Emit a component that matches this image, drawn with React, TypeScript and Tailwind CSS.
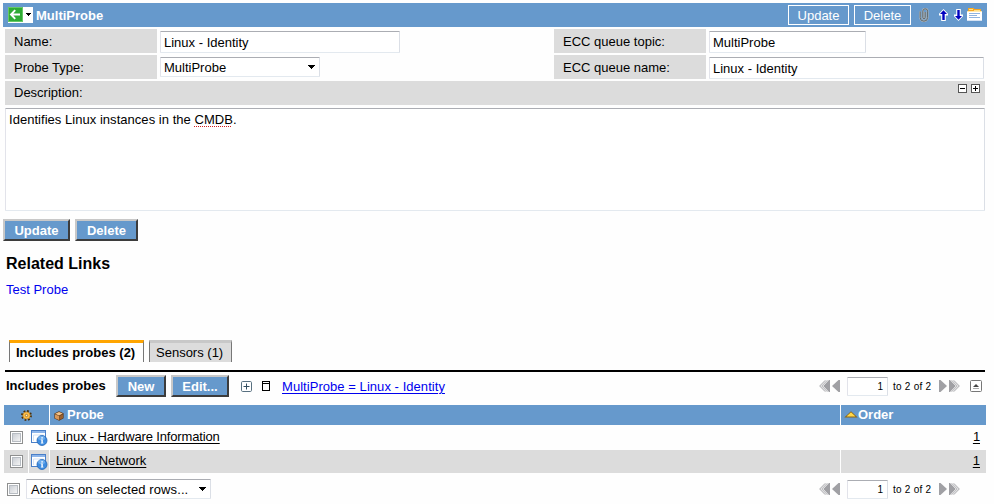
import React from "react";

const field =
  "border border-t-[#abadb3] border-l-[#e2e3ea] border-r-[#dbdfe6] border-b-[#e3e9ef] bg-white rounded-[1px]";

function BackMenu() {
  return (
    <svg width="25" height="16" viewBox="0 0 25 16" shapeRendering="crispEdges">
      <rect width="25" height="16" fill="#fff" />
      <rect x="0" y="0" width="15" height="15" fill="#66c866" />
      <rect x="1" y="1" width="13" height="13" fill="#2eab34" />
      <path d="M3 7.5h9M7.2 3.2L3 7.5l4.2 4.3" stroke="#fff" strokeWidth="1.9" fill="none" shapeRendering="auto" />
      <path d="M18 6h5v1h-1v1h-1v1h-1v-1h-1v-1h-1z" fill="#000" />
    </svg>
  );
}

function Clip() {
  return (
    <svg width="10" height="14" viewBox="0 0 10 14" fill="none">
      <path d="M1.2 3.5v6a3.7 3.7 0 0 0 7.4 0V3.2a2.4 2.4 0 0 0-4.8 0v6.3a1.2 1.2 0 0 0 2.4 0V4" stroke="#aeb6bc" strokeWidth="2" />
      <path d="M1.2 3.5v6a3.7 3.7 0 0 0 7.4 0V3.2a2.4 2.4 0 0 0-4.8 0v6.3a1.2 1.2 0 0 0 2.4 0V4" stroke="#5e686c" strokeWidth="1" />
    </svg>
  );
}

function Arrow({ down = false }: { down?: boolean }) {
  return (
    <svg width="9" height="12" viewBox="0 0 9 12" className={down ? "rotate-180" : ""}>
      <path d="M4.5 0L9 4.8v1.7H6.8V12H2.2V6.5H0V4.8z" fill="#fff" />
      <path d="M4.5 1.2L8 5H5.7v6H3.3V5H1z" fill="#0000c0" />
    </svg>
  );
}

function FormIcon() {
  return (
    <svg width="15" height="13" viewBox="0 0 15 13" shapeRendering="crispEdges">
      <path d="M1 0h6v1h7v3H1z" fill="#f5a623" />
      <path d="M2 1h4v1H2zM7 2h6v1H7z" fill="#ffe08a" />
      <rect x="0" y="3" width="15" height="10" fill="#fff" />
      <rect x="0" y="3" width="15" height="1" fill="#ffe9ae" />
      <path d="M2 5h11v1H2zM2 7h8v1H2zM2 9h11v1H2z" fill="#8fb3df" />
      <rect x="0" y="12" width="15" height="1" fill="#d5e2f2" />
    </svg>
  );
}

function SizeBox({ plus = false }: { plus?: boolean }) {
  return (
    <svg width="9" height="9" viewBox="0 0 9 9" shapeRendering="crispEdges">
      <rect x=".5" y=".5" width="8" height="8" fill="#fff" stroke="#555" />
      <path d={plus ? "M2 4h5v1H2zM4 2h1v5H4z" : "M2 4h5v1H2z"} fill="#000" />
    </svg>
  );
}

function Caret() {
  return (
    <svg width="7" height="4" viewBox="0 0 7 4" shapeRendering="crispEdges">
      <path d="M0 0h7v1H6v1H5v1H4v1H3V3H2V2H1V1H0z" fill="#000" />
    </svg>
  );
}

function Gear() {
  return (
    <svg width="11" height="11" viewBox="0 0 11 11">
      <circle cx="5.5" cy="5.5" r="4.5" fill="none" stroke="#4a2f08" strokeWidth="1.9" strokeDasharray="1.77 1.77" />
      <circle cx="5.5" cy="5.5" r="3.6" fill="#ffc04a" stroke="#c07a18" strokeWidth=".7" />
      <circle cx="5.5" cy="5.5" r="1.2" fill="#fff3cf" stroke="#8a5a14" strokeWidth=".7" />
    </svg>
  );
}

function Cube() {
  return (
    <svg width="10" height="10" viewBox="0 0 10 10">
      <path d="M5 .3l4.6 2v5L5.2 9.8.4 7.6v-5z" fill="#5c3616" />
      <path d="M5 1l3.8 1.6L5 4.4 1.2 2.8z" fill="#f0c48c" />
      <path d="M1 3.3l4 1.6v4L1 7.2z" fill="#d8985a" />
      <path d="M5.3 5L9 3.2v3.7L5.3 8.9z" fill="#98602d" />
    </svg>
  );
}

function InfoIcon() {
  return (
    <svg width="17" height="16" viewBox="0 0 17 16">
      <rect x=".5" y=".5" width="14" height="12" fill="#fff" stroke="#4a7fc8" />
      <rect x="1" y="1" width="13" height="2" fill="#8db5ea" />
      <path d="M2.5 5h10M2.5 11V5" stroke="#d4e2f5" fill="none" />
      <circle cx="11" cy="10.5" r="5" fill="#3d8ce0" stroke="#2464b4" strokeWidth=".8" />
      <ellipse cx="10.5" cy="8" rx="3.5" ry="2.2" fill="#8cc2f5" opacity=".6" />
      <path d="M10.3 7.2h1.6v1.4h-1.6zM9.8 9.5h2v3.2h.7v.8H9.8v-.8h.6v-2.4h-.6z" fill="#fff" />
    </svg>
  );
}

function Checkbox() {
  return (
    <span className="block size-[13px] shrink-0 border border-[#8e8f8f] bg-white p-px">
      <span className="block size-[9px] border border-[#b7bcc2] bg-linear-to-br from-[#cbcfd5] to-[#f4f4f4]" />
    </span>
  );
}

function OutsetButton({ label, className }: { label: string; className: string }) {
  return (
    <button
      className={
        "h-[22px] shrink-0 border-2 border-t-[#c8c8c8] border-l-[#c8c8c8] border-r-[#3c3c3c] border-b-[#3c3c3c] bg-[#6699cc] text-center font-bold leading-[19px] text-white " +
        className
      }
    >
      {label}
    </button>
  );
}

function DoubleArrow({ flip = false }: { flip?: boolean }) {
  return (
    <svg width="21" height="12" viewBox="0 0 21 12" className={flip ? "-scale-x-100" : ""}>
      <path d="M6.3 .3L.7 6l5.6 5.7M8.3 .3L2.7 6l5.6 5.7" fill="none" stroke="#a4a4a8" strokeWidth="1" />
      <path d="M11 0v12h-1L4.2 6 10 0z" fill="#a0a0a4" />
      <path d="M21 0v12h-1.5L13 6l6.5-6z" fill="#a0a0a4" />
    </svg>
  );
}

function Pager() {
  return (
    <div className="flex items-center text-[10px]">
      <DoubleArrow />
      <div className={"ml-[7px] h-[19px] w-[41px] pr-1 text-right leading-[18px] " + field}>1</div>
      <span className="ml-[5px] w-[39px] pt-px whitespace-nowrap tracking-[0.25px]">to 2 of 2</span>
      <span className="ml-[7px]">
        <DoubleArrow flip />
      </span>
    </div>
  );
}

function Label({ text }: { text: string }) {
  return <div className="h-6 w-[152px] shrink-0 bg-[#dcdcdc] pl-[9px] leading-[25px]">{text}</div>;
}

function Row({ name, shade, tall, text }: { name: string; shade: string; tall: string; text: string }) {
  return (
    <div className={"flex gap-px " + tall}>
      <div className={"flex w-6 items-center pl-1.5 " + shade}>
        <Checkbox />
      </div>
      <div className={"flex w-5 items-center pl-0.5 " + shade}>
        <InfoIcon />
      </div>
      <div className={"w-[790px] pl-1.5 " + text + " " + shade}>
        <a className="underline underline-offset-2">{name}</a>
      </div>
      <div className={"flex-1 pr-1.5 text-right " + text + " " + shade}>
        <a className="underline underline-offset-2">1</a>
      </div>
    </div>
  );
}

export default function App() {
  return (
    <div className="h-[504px] w-[994px] overflow-hidden bg-[#fefefe] pt-[3px] font-['Liberation_Sans',Arial,sans-serif] text-[13px] leading-4 text-black">
      <header className="ml-[3px] flex h-6 w-[984px] items-center bg-[#6699cc] pl-[5px] text-white">
        <BackMenu />
        <span className="ml-[3px] flex-1 pt-px font-bold">MultiProbe</span>
        <button className="h-5 w-[61px] border border-white pt-px">Update</button>
        <button className="ml-[5px] h-5 w-[57px] border border-white pt-px">Delete</button>
        <span className="ml-2"><Clip /></span>
        <span className="ml-2.5"><Arrow /></span>
        <span className="ml-1.5"><Arrow down /></span>
        <span className="mr-[5px] mb-0.5 ml-1"><FormIcon /></span>
      </header>

      <section className="mt-0.5 ml-[5px] w-[980px]">
        <div className="flex h-6">
          <Label text="Name:" />
          <div className={"mt-0.5 ml-[3px] h-[22px] w-60 pl-[3px] leading-[21px] " + field}>Linux - Identity</div>
          <div className="ml-[154px]"><Label text="ECC queue topic:" /></div>
          <div className={"mt-0.5 ml-[3px] h-[22px] w-[157px] pl-[3px] leading-[21px] " + field}>MultiProbe</div>
        </div>
        <div className="mt-0.5 flex h-6">
          <Label text="Probe Type:" />
          <div className={"mt-0.5 ml-[3px] flex h-5 w-40 items-center justify-between pr-1 pl-[3px] " + field}>
            <span className="pt-px">MultiProbe</span>
            <Caret />
          </div>
          <div className="ml-[234px]"><Label text="ECC queue name:" /></div>
          <div className={"mt-0.5 ml-[3px] h-[22px] w-[275px] pl-[3px] leading-[21px] " + field}>Linux - Identity</div>
        </div>
        <div className="mt-0.5 flex h-6 justify-between bg-[#dcdcdc] pr-[5px] pl-[9px] leading-6">
          Description:
          <div className="flex gap-1 pt-[3px]"><SizeBox /><SizeBox plus /></div>
        </div>
        <div className={"mt-[3px] h-[103px] pt-[3px] pl-[3px] tracking-[0.035px] " + field}>
          Identifies Linux instances in the{" "}
          <span className="underline decoration-[#d02020] decoration-dotted decoration-1 underline-offset-2">CMDB</span>.
        </div>
      </section>

      <div className="mt-2 ml-[3px] flex gap-[5px]">
        <OutsetButton label="Update" className="w-[67px]" />
        <OutsetButton label="Delete" className="w-[63px]" />
      </div>
      <h2 className="mt-[13px] ml-1.5 text-base leading-5 font-bold">Related Links</h2>
      <a className="mt-2 ml-1.5 block text-[#0000ee]">Test Probe</a>

      <nav className="mt-[42px] ml-[9px] flex h-[22px] gap-[5px]">
        <div className="w-[135px] border-x border-t-[3px] border-x-[#777] border-t-[#ffa500] pl-1.5 leading-[19px] font-bold">
          Includes probes (2)
        </div>
        <div className="w-[83px] border-x border-t-[3px] border-x-[#777] border-t-[#c8c8c8] bg-[#dcdcdc] pl-1.5 leading-[19px]">
          Sensors (1)
        </div>
      </nav>

      <div className="mt-2 ml-[5px] h-0.5 w-[980px] bg-black" />
      <div className="mt-[3px] ml-1.5 flex h-[22px] w-[976px] items-center">
        <b className="w-[110px]">Includes probes</b>
        <OutsetButton label="New" className="w-[50px]" />
        <OutsetButton label="Edit..." className="ml-[5px] w-[58px]" />
        <svg className="ml-3" width="11" height="11" viewBox="0 0 11 11">
          <rect x=".5" y=".5" width="10" height="10" rx="1.2" fill="#fff" stroke="#587080" />
          <path d="M2.5 5.5h6M5.5 2.5v6" stroke="#344e60" />
        </svg>
        <svg className="ml-[10px]" width="8" height="10" viewBox="0 0 8 10" shapeRendering="crispEdges">
          <path d="M.5 .5h7v9h-7zM0 2.5h8" fill="none" stroke="#000" />
        </svg>
        <a className="ml-3 flex-1 pt-px tracking-[0.05px] text-[#0000ee] underline underline-offset-2">MultiProbe = Linux - Identity</a>
        <Pager />
        <svg className="ml-2.5" width="12" height="12" viewBox="0 0 12 12">
          <rect x=".5" y=".5" width="11" height="11" rx="1" fill="#fff" stroke="#777" />
          <path d="M3 7l3-3 3 3z" fill="#444" />
          <path d="M3 8.5h6" stroke="#aaa" />
        </svg>
      </div>

      <section className="mt-2 ml-1 w-[982px]">
        <div className="flex h-5 gap-px font-bold text-white">
          <div className="flex w-[45px] items-center justify-center bg-[#6699cc]"><Gear /></div>
          <div className="flex w-[790px] items-center gap-[3px] bg-[#6699cc] pl-1">
            <span className="pt-0.5"><Cube /></span>Probe
          </div>
          <div className="flex flex-1 items-center bg-[#6699cc] pl-[3px]">
            <svg width="14" height="7" viewBox="0 0 14 7" className="mb-0.5">
              <path d="M7 .3L13.7 6.5H.3z" fill="#8a6414" />
              <path d="M7 1.2L11.5 5.4h-9z" fill="#ffd84a" />
            </svg>
            Order
          </div>
        </div>
        <Row name="Linux - Hardware Information" shade="bg-[#fefefe] tracking-[-0.14px]" tall="h-[25px]" text="leading-[23px]" />
        <Row name="Linux - Network" shade="bg-[#dcdcdc]" tall="h-[23px]" text="leading-[21px]" />
      </section>

      <footer className="mt-1.5 ml-[7px] flex h-5 w-[953px] items-center">
        <Checkbox />
        <div className={"mr-auto ml-1.5 flex h-5 w-[185px] items-center justify-between pr-1 pl-1 tracking-[0.1px] " + field}>
          <span className="pt-px">Actions on selected rows...</span>
          <Caret />
        </div>
        <Pager />
      </footer>
    </div>
  );
}
